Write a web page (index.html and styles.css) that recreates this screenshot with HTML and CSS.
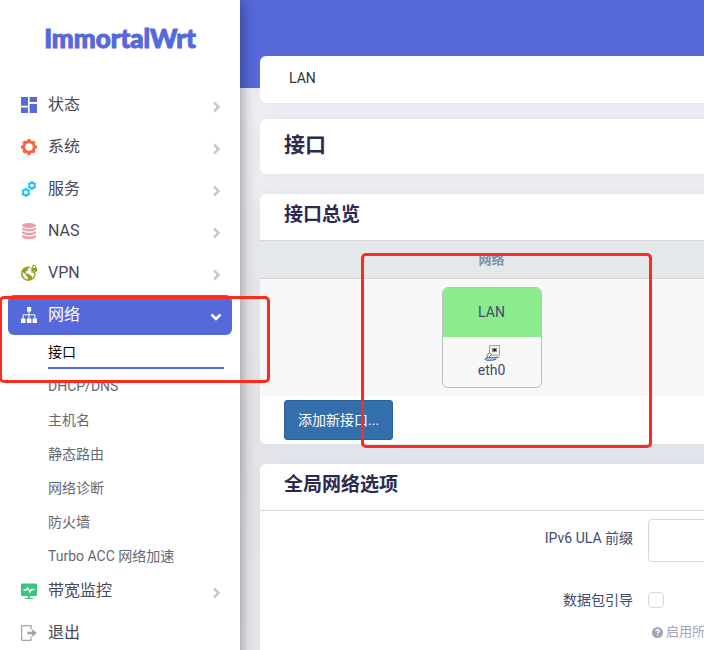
FILE: index.html
```html
<!DOCTYPE html>
<html lang="zh-CN">
<head>
<meta charset="utf-8">
<title>ImmortalWrt - 接口</title>
<link rel="stylesheet" href="styles.css">
</head>
<body>
<div class="app">
  <aside class="sidebar">
    <a class="brand" href="#">ImmortalWrt</a>
    <nav>
      <ul class="menu">
        <li><a class="item" href="#">
          <svg class="icon status" viewBox="0 0 16 16"><path d="M0 0h7v8.700H0zM8.600 0H16v5H8.600zM0 10.400h7V16H0zM8.600 7H16v9H8.600z"/></svg>
          <span>状态</span><svg class="chevron" viewBox="0 0 12 12"><path d="M4 1.500 8.500 6 4 10.500"/></svg></a></li>
        <li><a class="item" href="#">
          <svg class="icon system" viewBox="0 0 16 16"><circle cx="8" cy="8" r="5.300"/><path d="M8 0v2.500M8 13.500V16M0 8h2.500M13.500 8H16M2.350 2.350 4.200 4.200M11.800 11.800l1.850 1.850M2.350 13.650 4.200 11.800M11.800 4.200l1.850-1.850"/></svg>
          <span>系统</span><svg class="chevron" viewBox="0 0 12 12"><path d="M4 1.500 8.500 6 4 10.500"/></svg></a></li>
        <li><a class="item" href="#">
          <svg class="icon services" viewBox="0 0 16 16"><circle cx="11" cy="4.500" r="2.700"/><path d="M11 0v2M11 7v2M7.100 2.250l1.700 1M13.200 5.750l1.700 1M7.100 6.750l1.700-1M13.200 3.250l1.700-1"/><circle cx="4.900" cy="11.300" r="2.900"/><path d="M4.900 6.700v2M4.900 13.900v2M.9 9l1.700 1M7.200 12.600l1.700 1M.9 13.600l1.700-1M7.200 10l1.700-1"/></svg>
          <span>服务</span><svg class="chevron" viewBox="0 0 12 12"><path d="M4 1.500 8.500 6 4 10.500"/></svg></a></li>
        <li><a class="item" href="#">
          <svg class="icon nas" viewBox="0 0 16 16"><ellipse cx="8" cy="2.500" rx="7" ry="2.500"/><path d="M1 4.500q7 3.400 14 0v1.800q-1.400 2.100-7 2.100T1 6.300zM1 8.200q7 3.400 14 0V10q-1.400 2.100-7 2.100T1 10zM1 11.900q7 3.400 14 0v2q-1.400 2.100-7 2.100t-7-2.100z"/></svg>
          <span>NAS</span><svg class="chevron" viewBox="0 0 12 12"><path d="M4 1.500 8.500 6 4 10.500"/></svg></a></li>
        <li><a class="item" href="#">
          <svg class="icon vpn" viewBox="0 0 16 16"><circle cx="7.300" cy="8.700" r="7.300"/><path class="land" d="M1.600 7 5 9.700v1l1.800 1v2.700C3.500 14 1.300 11.800 1.600 7zM4.500 6.700l2.300-1.200.2-2.100 2.400-1 .9 4.800 2.700.7c.6 2.200-.3 3.800-1.500 5l-.9-2.100-1.400-.5-1.700-1.600-2.500-.2z"/><path class="gap" d="M9.400 0H16v7H9.400z"/><path d="M10.300 2.700h.7V2c0-2.600 4-2.600 4 0v.7h1v4h-5.700zM12 2.700h2V2c0-1.300-2-1.300-2 0z"/></svg>
          <span>VPN</span><svg class="chevron" viewBox="0 0 12 12"><path d="M4 1.500 8.500 6 4 10.500"/></svg></a></li>
        <li><a class="item active" href="#">
          <svg class="icon" viewBox="0 0 16 16"><path d="M6 0h4.200v4.500H6zM0 11.500h4.500V16H0zM5.900 11.500h4.500V16H5.900zM11.600 11.500H16V16h-4.400z"/><path class="wire" d="M8 4v8M2.200 12V7.800h11.700V12"/></svg>
          <span>网络</span><svg class="chevron" viewBox="0 0 12 12"><path d="M1.500 3.500 6 8l4.500-4.500"/></svg></a>
          <ul class="submenu">
            <li><a class="current" href="#">接口</a></li>
            <li><a href="#">DHCP/DNS</a></li>
            <li><a href="#">主机名</a></li>
            <li><a href="#">静态路由</a></li>
            <li><a href="#">网络诊断</a></li>
            <li><a href="#">防火墙</a></li>
            <li><a href="#">Turbo ACC 网络加速</a></li>
          </ul></li>
        <li><a class="item" href="#">
          <svg class="icon bandwidth" viewBox="0 0 16 16"><path d="M1 .5h14q1 0 1 1v10.500q0 1-1 1H9V15h3v1H4v-1h3v-2H1q-1 0-1-1V1.500q0-1 1-1z"/><path class="pulse" d="M2.500 7H5l1.600-2 2.300 4 1.600-2.600h3"/></svg>
          <span>带宽监控</span><svg class="chevron" viewBox="0 0 12 12"><path d="M4 1.500 8.500 6 4 10.500"/></svg></a></li>
        <li><a class="item" href="#">
          <svg class="icon logout" viewBox="0 0 16 16"><path class="door" d="M10 4.500V1.300Q10 .6 9.300.6H1.400Q.6.6.6 1.400v13.200q0 .8.800.8h7.900q.7 0 .7-.7v-3.200"/><path d="M6.300 6.700h4.900V3.900L15.700 8l-4.500 4.100V9.300H6.300z"/></svg>
          <span>退出</span></a></li>
      </ul>
    </nav>
  </aside>

  <main class="main">
    <div class="card tabs"><a href="#">LAN</a></div>
    <div class="card page-title"><h1>接口</h1></div>

    <section class="card">
      <h2>接口总览</h2>
      <table class="interfaces">
        <thead><tr><th>网络</th><th></th></tr></thead>
        <tbody><tr>
          <td>
            <div class="iface">
              <div class="iface-name">LAN</div>
              <div class="iface-device">
                <svg viewBox="0 0 16 16"><path fill="#f0efe8" stroke="#a5a39b" d="M5.500.5h10v9.700h-10z"/><path fill="#8f8e80" d="M8 3h5v4H8z"/><path fill="#111" d="M9.500 4h2.200v2H9.500z"/><path fill="none" stroke="#4f80b8" stroke-width="1.500" d="M1 14.800c1.500-3.500 3.500-2 5-2 3 0 5 .2 8.500-.5M2 15c4 .3 8 .4 10-.8"/><path fill="#e6e5dd" stroke="#77766e" d="m2.500 10.500 3-3 2 2-3 3z"/></svg>
                <span>eth0</span>
              </div>
            </div>
          </td>
          <td></td>
        </tr></tbody>
      </table>
      <div class="actions"><button type="button">添加新接口...</button></div>
    </section>

    <section class="card">
      <h2>全局网络选项</h2>
      <form class="options">
        <div class="row">
          <label for="ula">IPv6 ULA 前缀</label>
          <div><input class="text" id="ula" type="text"></div>
        </div>
        <div class="row steering">
          <label for="steering">数据包引导</label>
          <div>
            <div class="check"><input id="steering" type="checkbox"></div>
            <p class="hint"><svg viewBox="0 0 12 12"><circle cx="6" cy="6" r="6"/><path d="M4.200 4.600c0-2.300 3.700-2.100 3.700 0C7.900 5.900 6 5.800 6 7.200M6 8.300v1.300"/></svg>启用所</p>
          </div>
        </div>
      </form>
    </section>
  </main>
</div>
<div class="marker marker-menu"></div>
<div class="marker marker-iface"></div>
</body>
</html>
```
FILE: styles.css
```css
* { box-sizing: border-box; }

body {
  margin: 0;
  overflow: hidden;
  background: #ecedf2;
  color: #3f4b70;
  font-family: Roboto, "Noto Sans CJK SC", sans-serif;
  font-size: 14px;
  line-height: 20px;
}

a { color: inherit; text-decoration: none; }
ul { list-style: none; margin: 0; padding: 0; }
h1, h2, p { margin: 0; }

.app { display: flex; min-height: 100vh; }

/* Sidebar */
.sidebar {
  position: relative;
  z-index: 1;
  flex: 0 0 240px;
  background: #fff;
  box-shadow: 0 0 16px rgba(0, 0, 0, .45);
}

.brand {
  display: block;
  height: 85px;
  padding-top: 22px;
  color: #5569db;
  font-family: Lato, sans-serif;
  font-size: 26px;
  font-weight: 900;
  line-height: 32px;
  text-align: center;
  -webkit-text-stroke: 1px #5569db;
}

.menu { display: flex; flex-direction: column; gap: 2px; padding: 0 8px; }

.item {
  display: flex;
  align-items: center;
  height: 40px;
  padding: 0 10px 0 13px;
  border-radius: 6px;
  color: #484856;
  font-size: 16px;
}

.item span { flex: 1; margin-left: 11px; }
.item.active { background: #5569db; color: #fff; }

.icon { width: 16px; height: 16px; fill: currentColor; }
.status { fill: #5569db; }
.system { fill: none; stroke: #fa6342; stroke-width: 3; }
.services { fill: none; stroke: #2ac4e8; stroke-width: 2; }
.nas { fill: #f19cab; }
.vpn { fill: #9a9d1c; }
.vpn .land, .vpn .gap { fill: #fff; }
.wire { fill: none; stroke: currentColor; }
.bandwidth { fill: #35c782; }
.pulse { fill: none; stroke: #fff; stroke-width: 1.500; }
.logout { fill: #9ba5af; }
.door { fill: none; stroke: #9ba5af; stroke-width: 1.300; }

.chevron {
  width: 12px;
  height: 12px;
  margin-top: 4px;
  fill: none;
  stroke: #c5cad0;
  stroke-width: 2.500;
}
.active .chevron { stroke: #fff; }

.submenu { margin: 0 0 -4px 40px; padding-right: 8px; }
.submenu a { display: block; height: 34px; color: #68686c; line-height: 34px; }
.submenu .current { border-bottom: 2px solid #5569db; color: #000; }

/* Content */
.main {
  flex: 1 0 960px;
  display: flex;
  flex-direction: column;
  gap: 20px;
  padding: 56px 0 0 20px;
  background: linear-gradient(#5569db 88px, #f1f2f6 88px, #e7e8ee 440px, #ecedf2);
}

.card {
  overflow: hidden;
  flex-shrink: 0;
  border-radius: 6px;
  background: #fff;
  box-shadow: 0 0 16px rgba(136, 152, 170, .15);
}

.tabs { margin-bottom: -4px; padding: 12px 29px 15px; color: #333; }
.page-title { padding: 12px 24px 15px; }
h1, h2 { color: #2c2a50; font-weight: 700; }
h1 { font-size: 21px; line-height: 28px; }
h2 { padding: 7px 24px 11px; font-size: 19px; line-height: 28px; }

.interfaces { width: 100%; border-collapse: collapse; table-layout: fixed; text-align: center; }
.interfaces th {
  height: 38px;
  padding: 0;
  border: 1px solid #d5d8dc;
  border-width: 1px 0;
  background: #e4e8eb;
  color: #8090a4;
  font-size: 13px;
  line-height: 16px;
}
.interfaces th:first-child { width: 463px; }
.interfaces td { height: 117px; padding: 8px 0; background: #f8f8f8; vertical-align: top; }

.iface {
  width: 100px;
  margin: 0 auto;
  overflow: hidden;
  border: 1px solid #bdbdbd;
  border-radius: 6px;
}
.iface-name { padding: 14px 0 15px; background: #8ceb8c; }
.iface-device {
  display: flex;
  flex-direction: column;
  align-items: center;
  padding: 8px 0;
  line-height: 18px;
}
.iface-device svg { width: 16px; height: 16px; }

.actions { padding: 4px 24px; }
button {
  display: block;
  height: 40px;
  padding: 0 13px;
  border: 1px solid #2c6299;
  border-radius: 3px;
  background: #326fac;
  color: #fff;
  font: inherit;
}

.options { padding-top: 8px; border-top: 1px solid #d5d8dc; }
.row { display: grid; grid-template-columns: 388px 1fr; }
.row label { padding: 9px 15px 0 0; text-align: right; }
.text {
  display: block;
  width: 320px;
  height: 43px;
  padding: 10px 12px;
  border: 1px solid #d3d9e0;
  border-radius: 4px;
  font: inherit;
}
.steering { margin-top: 19px; padding-bottom: 40px; }
.check { padding-top: 11px; }
.check input {
  display: block;
  width: 16px;
  height: 16px;
  margin: 0;
  appearance: none;
  border: 1px solid #d3d9e0;
  border-radius: 4px;
  background: #fff;
}
.hint {
  display: flex;
  align-items: center;
  gap: 3px;
  padding: 14px 0 0 4px;
  color: #a0a5b5;
  font-size: 13px;
}
.hint svg { width: 11px; height: 11px; }
.hint circle { fill: #a0a5b5; }
.hint path { fill: none; stroke: #fff; stroke-width: 1.500; }

/* Highlight frames laid over the page */
.marker {
  position: absolute;
  z-index: 2;
  border: 3px solid #fb2c1d;
  border-radius: 5px;
  pointer-events: none;
}
.marker-menu { top: 296px; left: -1px; width: 271px; height: 87px; }
.marker-iface { top: 253px; left: 361px; width: 291px; height: 195px; }
```
